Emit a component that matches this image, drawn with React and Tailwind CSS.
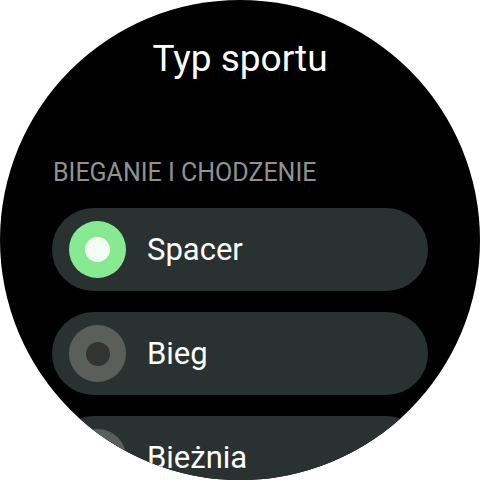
import React from 'react';

const sports = [
  { name: 'Spacer', selected: true },
  { name: 'Bieg', selected: false },
  { name: 'Bieżnia', selected: false },
];

function Radio({ selected }) {
  if (selected) {
    return (
      <div className="w-[57px] h-[57px] rounded-full bg-[#87e992] flex items-center justify-center shrink-0">
        <div className="w-[25px] h-[25px] rounded-full bg-[#f4fdf4]" />
      </div>
    );
  }
  return (
    <div className="w-[57px] h-[57px] rounded-full bg-[#5a5f5c] flex items-center justify-center shrink-0">
      <div className="w-[24px] h-[24px] rounded-full bg-[#333334]" />
    </div>
  );
}

export default function App() {
  return (
    <div className="w-[480px] h-[480px] bg-white" style={{ fontFamily: 'Roboto, "Noto Sans", sans-serif' }}>
      <div className="w-full h-full rounded-full bg-black overflow-hidden flex flex-col">
        <h1 className="pt-[37px] text-center text-white text-[37px] leading-[43px] font-normal">
          Typ sportu
        </h1>
        <div className="mt-[78px] px-[53px] text-[25px] leading-[29px] text-[#8e9391]">
          BIEGANIE I CHODZENIE
        </div>
        <div className="mt-[21px] flex flex-col gap-[21px] px-[52px]">
          {sports.map((s) => (
            <div
              key={s.name}
              className="h-[83px] shrink-0 rounded-full bg-[#2a3231] flex items-center pl-[17px] gap-[21px]"
            >
              <Radio selected={s.selected} />
              <span className="text-white text-[31px] leading-[36px]">{s.name}</span>
            </div>
          ))}
        </div>
      </div>
    </div>
  );
}
